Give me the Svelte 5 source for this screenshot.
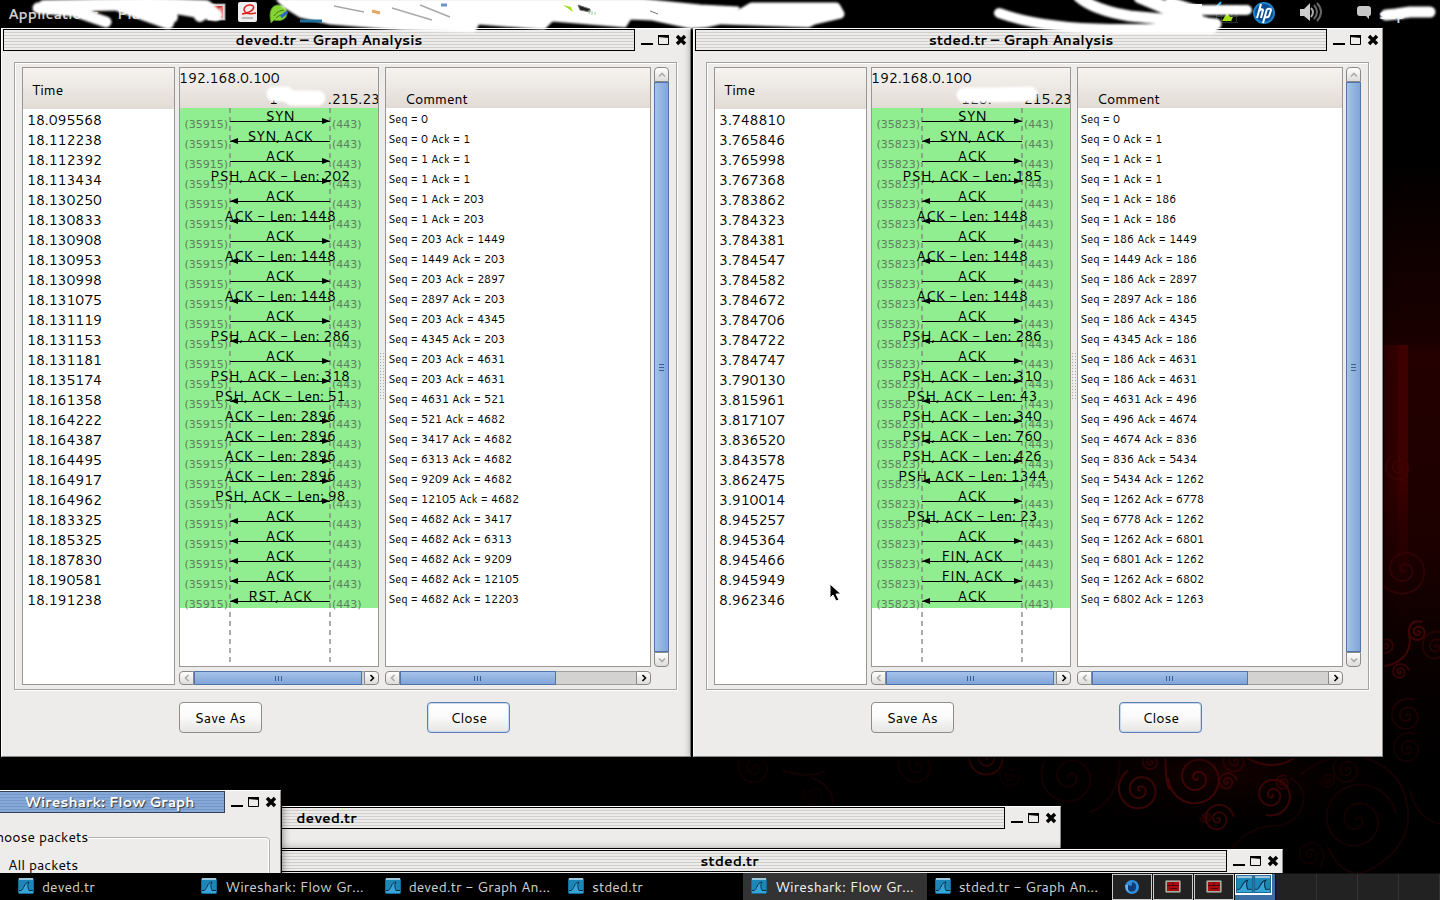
<script>
  const deved = {
    title: "deved.tr – Graph Analysis",
    port: "(35915)",
    prefix: "1",
    suffix: ".215.23",
    blot: "M12 10H24L30 14H56",
    rows: [
      ["18.095568", "SYN", 1, "Seq = 0"],
      ["18.112238", "SYN, ACK", 0, "Seq = 0 Ack = 1"],
      ["18.112392", "ACK", 1, "Seq = 1 Ack = 1"],
      ["18.113434", "PSH, ACK - Len: 202", 1, "Seq = 1 Ack = 1"],
      ["18.130250", "ACK", 0, "Seq = 1 Ack = 203"],
      ["18.130833", "ACK - Len: 1448", 0, "Seq = 1 Ack = 203"],
      ["18.130908", "ACK", 1, "Seq = 203 Ack = 1449"],
      ["18.130953", "ACK - Len: 1448", 0, "Seq = 1449 Ack = 203"],
      ["18.130998", "ACK", 1, "Seq = 203 Ack = 2897"],
      ["18.131075", "ACK - Len: 1448", 0, "Seq = 2897 Ack = 203"],
      ["18.131119", "ACK", 1, "Seq = 203 Ack = 4345"],
      ["18.131153", "PSH, ACK - Len: 286", 0, "Seq = 4345 Ack = 203"],
      ["18.131181", "ACK", 1, "Seq = 203 Ack = 4631"],
      ["18.135174", "PSH, ACK - Len: 318", 1, "Seq = 203 Ack = 4631"],
      ["18.161358", "PSH, ACK - Len: 51", 0, "Seq = 4631 Ack = 521"],
      ["18.164222", "ACK - Len: 2896", 1, "Seq = 521 Ack = 4682"],
      ["18.164387", "ACK - Len: 2896", 1, "Seq = 3417 Ack = 4682"],
      ["18.164495", "ACK - Len: 2896", 1, "Seq = 6313 Ack = 4682"],
      ["18.164917", "ACK - Len: 2896", 1, "Seq = 9209 Ack = 4682"],
      ["18.164962", "PSH, ACK - Len: 98", 1, "Seq = 12105 Ack = 4682"],
      ["18.183325", "ACK", 0, "Seq = 4682 Ack = 3417"],
      ["18.185325", "ACK", 0, "Seq = 4682 Ack = 6313"],
      ["18.187830", "ACK", 0, "Seq = 4682 Ack = 9209"],
      ["18.190581", "ACK", 0, "Seq = 4682 Ack = 12105"],
      ["18.191238", "RST, ACK", 0, "Seq = 4682 Ack = 12203"],
    ],
  };

  const stded = {
    title: "stded.tr – Graph Analysis",
    port: "(35823)",
    prefix: "128.",
    suffix: "215.23",
    blot: "M10 11H32L76 10",
    rows: [
      ["3.748810", "SYN", 1, "Seq = 0"],
      ["3.765846", "SYN, ACK", 0, "Seq = 0 Ack = 1"],
      ["3.765998", "ACK", 1, "Seq = 1 Ack = 1"],
      ["3.767368", "PSH, ACK - Len: 185", 1, "Seq = 1 Ack = 1"],
      ["3.783862", "ACK", 0, "Seq = 1 Ack = 186"],
      ["3.784323", "ACK - Len: 1448", 0, "Seq = 1 Ack = 186"],
      ["3.784381", "ACK", 1, "Seq = 186 Ack = 1449"],
      ["3.784547", "ACK - Len: 1448", 0, "Seq = 1449 Ack = 186"],
      ["3.784582", "ACK", 1, "Seq = 186 Ack = 2897"],
      ["3.784672", "ACK - Len: 1448", 0, "Seq = 2897 Ack = 186"],
      ["3.784706", "ACK", 1, "Seq = 186 Ack = 4345"],
      ["3.784722", "PSH, ACK - Len: 286", 0, "Seq = 4345 Ack = 186"],
      ["3.784747", "ACK", 1, "Seq = 186 Ack = 4631"],
      ["3.790130", "PSH, ACK - Len: 310", 1, "Seq = 186 Ack = 4631"],
      ["3.815961", "PSH, ACK - Len: 43", 0, "Seq = 4631 Ack = 496"],
      ["3.817107", "PSH, ACK - Len: 340", 1, "Seq = 496 Ack = 4674"],
      ["3.836520", "PSH, ACK - Len: 760", 0, "Seq = 4674 Ack = 836"],
      ["3.843578", "PSH, ACK - Len: 426", 1, "Seq = 836 Ack = 5434"],
      ["3.862475", "PSH, ACK - Len: 1344", 0, "Seq = 5434 Ack = 1262"],
      ["3.910014", "ACK", 1, "Seq = 1262 Ack = 6778"],
      ["8.945257", "PSH, ACK - Len: 23", 0, "Seq = 6778 Ack = 1262"],
      ["8.945364", "ACK", 1, "Seq = 1262 Ack = 6801"],
      ["8.945466", "FIN, ACK", 0, "Seq = 6801 Ack = 1262"],
      ["8.945949", "FIN, ACK", 1, "Seq = 1262 Ack = 6802"],
      ["8.962346", "ACK", 0, "Seq = 6802 Ack = 1263"],
    ],
  };

  const tasks = [
    { name: "deved.tr" },
    { name: "Wireshark: Flow Gr..." },
    { name: "deved.tr - Graph An..." },
    { name: "stded.tr" },
    { name: "Wireshark: Flow Gr...", active: true },
    { name: "stded.tr - Graph An..." },
  ];

  const workspaces = ["firefox", "term", "term", "sharks", "", "", "", ""];

  // x, y, radius, turn, opacity
  const swirls = [
    [988, 758, 19, 0, 0.7],
    [1070, 777, 34, 2, 0.3],
    [1011, 776, 12, 1, 0.2],
    [1140, 790, 23, 1, 0.9],
    [1151, 762, 10, 2, 0.7],
    [1197, 778, 29, 0, 1],
    [1227, 782, 10, 3, 0.8],
    [1235, 761, 13, 1, 0.6],
    [1272, 795, 21, 5, 0.9],
    [1283, 783, 8, 2, 0.6],
    [1218, 819, 16, 3, 0.8],
    [1206, 817, 6, 0, 0.6],
    [1357, 820, 40, 3, 0.3],
    [1347, 770, 15, 1, 0.3],
    [1328, 780, 8, 0, 0.25],
    [1408, 749, 17, 2, 0.3],
    [1310, 855, 15, 4, 0.25],
    [755, 768, 18, 1, 0.25],
    [917, 766, 22, 2, 0.25],
    [814, 795, 12, 1, 0.15],
    [1399, 468, 14, 1, 0.7],
    [1404, 570, 27, 0, 0.6],
    [1418, 632, 11, 2, 1],
    [1386, 645, 10, 1, 0.8],
    [1400, 672, 9, 3, 0.8],
    [1407, 716, 18, 2, 0.4],
    [1436, 647, 16, 2, 0.5],
  ];

  function spiral(cx, cy, r, turn) {
    let d = "";
    for (let i = 0; i <= 60; i++) {
      const a = turn + (i / 60) * Math.PI * 5;
      const rad = r * Math.pow(i / 60, 1.3);
      const x = cx + rad * Math.cos(a);
      const y = cy + rad * Math.sin(a);
      d += (i ? "L" : "M") + x.toFixed(1) + " " + y.toFixed(1);
    }
    return d;
  }
</script>

{#snippet titlebar(title, active)}
  <header class="titlebar">
    <h2 class:active>{title}</h2>
    <button aria-label="Minimize">
      <svg width="12" height="14"><path d="M0 10h12v2H0z" /></svg>
    </button>
    <button aria-label="Maximize">
      <svg width="12" height="14">
        <path d="M.5 2.5h10v9h-10z" fill="none" stroke="#000" />
        <path d="M0 2h11v3L0 4z" />
      </svg>
    </button>
    <button aria-label="Close window">
      <svg width="12" height="14"><path d="M2 3l8 8M10 3l-8 8" stroke="#000" stroke-width="3.4" /></svg>
    </button>
  </header>
{/snippet}

{#snippet arrow(dir, off)}
  <button class="step {dir}" class:off aria-label="Scroll {dir}">
    <svg width="8" height="8" viewBox="0 0 8 8">
      <path d="M2.5 1L5.5 4L2.5 7" fill="none" stroke="currentColor" stroke-width="1.6" />
    </svg>
  </button>
{/snippet}

{#snippet hscroll(size)}
  <div class="hscroll">
    {@render arrow("left", true)}
    <div class="trough"><div class="thumb" style="width: {size}%"><i></i><i></i><i></i></div></div>
    {@render arrow("right", false)}
  </div>
{/snippet}

{#snippet shark(size)}
  <svg class="shark" width={size} height={size} viewBox="0 0 16 16">
    <rect x=".5" y=".5" width="15" height="15" rx="1" fill="#1b86b8" stroke="#176c96" />
    <path d="M1 0h14v2H1z" fill="#9cc6dc" />
    <path d="M1 12c5 0 5-8 10-8c-2 3-1 6 0 8h4v3H1z" fill="#37a3d6" />
    <path d="M1 12.500h2c3-1 3-8 8-8.500c-2 3-1 6 0 8.500h4" fill="none" stroke="#0b2c40" />
  </svg>
{/snippet}

{#snippet analysis(win)}
  <section class="window">
    {@render titlebar(win.title, false)}
    <div class="frame">
      <div class="pane time">
        <div class="head">Time</div>
        <ol>
          {#each win.rows as row}
            <li>{row[0]}</li>
          {/each}
        </ol>
      </div>

      <div class="col graph">
        <div class="pane">
          <div class="head hosts">
            <div>192.168.0.100</div>
            <div class="host2">
              <span>{win.prefix}</span><span>{win.suffix}</span>
              <svg class="blot" width="90" height="26">
                <path d={win.blot} />
              </svg>
            </div>
          </div>
          <svg class="flow" width="198" height="558">
            <rect width="198" height={win.rows.length * 20} fill="#90ee90" />
            <path class="life" d="M50 0V554M150 0V554" />
            {#each win.rows as row, i}
              {@const y = i * 20 + 13}
              <text class="port" x="48" y={i * 20 + 20} text-anchor="end">{win.port}</text>
              <text class="port" x="152" y={i * 20 + 20}>(443)</text>
              <rect x="50" {y} width="100" height="1" />
              {#if row[2]}
                <path d="M150 {y}l-8 -3v6z" />
              {:else}
                <path d="M50 {y}l8 -3v6z" />
              {/if}
              <text class="flags" x="100" y={i * 20 + 13} text-anchor="middle">{row[1]}</text>
            {/each}
          </svg>
        </div>
        {@render hscroll(99)}
      </div>

      <div class="grip"></div>

      <div class="col comment">
        <div class="pane">
          <div class="head">Comment</div>
          <ol>
            {#each win.rows as row}
              <li>{row[3]}</li>
            {/each}
          </ol>
        </div>
        {@render hscroll(66)}
      </div>

      <div class="vscroll">
        {@render arrow("up", true)}
        <div class="thumb"><i></i><i></i><i></i></div>
        {@render arrow("down", true)}
      </div>
    </div>
    <footer>
      <button class="btn">Save As</button>
      <button class="btn default">Close</button>
    </footer>
  </section>
{/snippet}

<div class="desktop">
  <svg class="wallpaper" width="1440" height="900">
    <defs>
      <linearGradient id="glow" x1="0" y1="0" x2="0" y2="1">
        <stop offset="0" stop-color="#200000" stop-opacity="0" />
        <stop offset="0.3" stop-color="#1a0000" />
        <stop offset="0.32" stop-color="#240000" />
        <stop offset="0.65" stop-color="#1c0000" />
        <stop offset="1" stop-color="#0c0000" stop-opacity="0" />
      </linearGradient>
      <linearGradient id="beam" x1="0" y1="0" x2="0" y2="1">
        <stop offset="0" stop-color="#440000" />
        <stop offset="0.5" stop-color="#440000" />
        <stop offset="1" stop-color="#200000" stop-opacity="0" />
      </linearGradient>
      <radialGradient id="haze">
        <stop offset="0" stop-color="#160000" />
        <stop offset="1" stop-color="#000" stop-opacity="0" />
      </radialGradient>
    </defs>
    <rect width="1440" height="900" fill="#010000" />
    <rect x="1380" y="160" width="60" height="600" fill="url(#glow)" />
    <rect x="1380" y="345" width="28" height="280" fill="url(#beam)" opacity=".4" />
    <rect x="1398" y="345" width="10" height="260" fill="url(#beam)" opacity=".7" />
    <ellipse cx="1220" cy="770" rx="200" ry="70" fill="url(#haze)" />
    <g fill="none" stroke="#3e0505" stroke-width="2">
      {#each swirls as s}
        <path d={spiral(s[0], s[1], s[2], s[3])} opacity={s[4]} />
      {/each}
      <path d="M1236 750q34 28 64 4M1166 750q-2 30 4 40" />
      <path d="M1380 667q30-4 30-28q-4-14 6-18" />
      <path d="M1300 775q22-18 50-20q55 8 58 58q2 30-30 52t-50-18" opacity=".35" />
      <path d="M1230 850q20-26 50-24q24-8 24-30q-2-12-14-18" opacity=".3" />
      <path d="M1120 750q2 50-30 62" opacity=".3" />
      <path d="M782 770q30 10 44 0M810 777q26 10 22 30" opacity=".3" />
      <path d="M1410 790q6 28 30 34" opacity=".3" />
    </g>
  </svg>

  <nav class="panel">
    <div class="menus">
      <a href="#apps">Applications</a>
      <a href="#places">Places</a>
    </div>
    <svg width="58" height="28">
      <rect x="4" y="4" width="17" height="16" fill="#ddd" stroke="#999" />
      <path d="M6 6h13v12H6z" fill="#c33" />
      <path d="M6 14l13-8v12H6z" fill="#e77" />
      <rect x="34" y="2" width="19" height="20" rx="2" fill="#eee" />
      <path d="M38 14c14-2 14-10 7-9s-8 11 7 8" fill="none" stroke="#d22" stroke-width="1.500" />
      <path d="M38 18h11" stroke="#bbb" stroke-width="2" />
    </svg>
    <svg class="leaf" width="24" height="28">
      <path d="M2 22C-1 12 3 5 9 5c5 0 9 3 9 8c0 6-6 9-13 7l-3 3z" fill="#84d534" stroke="#4d8f17" />
      <path d="M5 16c4-6 8-5 10-6M7 18c3-3 6-3 9-4" fill="none" stroke="#3f7d10" />
      <path d="M12 17l6-5" stroke="#2a67c9" stroke-width="3" />
    </svg>
    <div class="spacer"></div>
    <div class="tray">
      <svg width="53" height="28">
        <path d="M0 4h17v18H0z" fill="#f4f1ea" />
        <path d="M5 18l9-5" stroke="#d77b35" stroke-width="3" />
        <path d="M31.500 5v18M36.500 5v18M41.500 5v18M46.500 5v18M51.500 5v18M31 6.500h22M31 11.500h22M31 16.500h22M31 22.500h22" stroke="#26302a" />
        <path d="M37 21l5-8l3 4h3l-2 4z" fill="#a4e215" />
        <path d="M31 8l5-6" stroke="#27b7e6" stroke-width="2" />
      </svg>
      <svg class="hp" width="22" height="28">
        <circle cx="11" cy="13" r="11" fill="#1c82cc" />
        <circle cx="11" cy="13" r="9" fill="#0a4c93" />
        <path d="M8 4L4 18M6 11q3-3 4-1l-2 8M14 9l-4 14M14 9q4-1 4 1l-2 6q-1 2-4 1" fill="none" stroke="#fff" stroke-width="2" />
      </svg>
      <svg class="volume" width="26" height="28">
        <path d="M0 9h4l6-6v18l-6-5H0z" fill="#ccc" />
        <path d="M11 8q4 4 0 9" fill="none" stroke="#aaa" stroke-width="2" />
        <path d="M14 5q6 7 0 14M17 3q8 9 0 18" fill="none" stroke="#666" stroke-width="2" />
      </svg>
      <svg width="16" height="28"><path d="M3 6h8q3 0 3 3v4q0 3-2 3v3l-3-3H3q-3 0-3-3V9q0-3 3-3z" fill="#c8c8c8" /></svg>
      <span class="user">sup</span>
    </div>
    <svg class="scribble left" width="860" height="34">
      <g>
        <path d="M38 8L74 11L106 22" stroke-width="11" />
        <path d="M44 6L150 4L206 6L216 15L176 8L120 6L168 23" stroke-width="12" />
        <path d="M140 8L172 17M196 8L200 16" stroke-width="12" />
        <path class="fill" d="M278 0H640L700 6L738 8L720 23L706 26L690 27L652 19L630 18L625 26L552 20L544 28L478 23L474 31L405 29L330 23L300 16L284 6z" stroke-width="3" />
        <path class="fill" d="M740 14L752 7H836L840 14L814 20L808 23L722 20z" stroke-width="9" />
      </g>
      <path d="M563 5l8 2l2 5z" fill="#a4de1c" />
      <path d="M578 5l12 4v3l-10-2zM650 11l8 3" fill="#222" stroke="#777" />
      <path d="M441 5h6" stroke="#6d93cf" stroke-width="3" />
      <path d="M372 11l8 2" stroke="#e9a766" stroke-width="3" />
      <path d="M300 21h22" stroke="#1e6f9c" stroke-width="3" />
      <path d="M334 6l30 6M392 8l40 12M420 5l30 12" stroke="#aaa" stroke-width="1.500" />
      <path d="M589 10v4M592 11v4M595 12v3" stroke="#9ad29a" />
    </svg>
    <svg class="scribble right" width="450" height="38">
      <g>
        <path d="M9 13Q50 28 120 29L222 29" stroke-width="10" />
        <path d="M89 -3Q104 10 140 16L226 24" stroke-width="11" />
        <path d="M150 -3L200 18L222 26" stroke-width="13" />
        <path d="M180 2L206 10H257" stroke-width="10" />
        <path d="M440 12L420 12L406 14L396 15" stroke-width="11" />
      </g>
    </svg>
  </nav>

  <div class="workspace">
    {@render analysis(deved)}
    {@render analysis(stded)}
  </div>

  <section class="window back main1">{@render titlebar("deved.tr", false)}</section>
  <section class="window back main2">{@render titlebar("stded.tr", false)}</section>
  <section class="window back dialog">
    {@render titlebar("Wireshark: Flow Graph", true)}
    <fieldset>
      <legend>Choose packets</legend>
      <label><input type="radio" name="packets" />All packets</label>
    </fieldset>
  </section>

  <div class="taskbar">
    <div class="tasks">
      {#each tasks as task}
        <button class:active={task.active}>{@render shark(16)}<span>{task.name}</span></button>
      {/each}
    </div>
    <div class="pager">
      {#each workspaces as ws, i}
        <button class={ws} class:used={ws} aria-label="Workspace {i + 1}">
          {#if ws == "firefox"}
            <svg width="16" height="16">
              <circle cx="8" cy="8" r="7" fill="#2f8fdd" />
              <path d="M8 3q5 1 4 6t-7 3q-3-3-1-6l3 1l1-2z" fill="#123a75" />
              <path d="M1 6q1 8 8 9q-6-1-5-9z" fill="#64b5f0" />
            </svg>
          {:else if ws == "term"}
            <svg width="16" height="16">
              <rect x=".5" y="1.500" width="15" height="12" rx="1" fill="#a9a9a2" stroke="#77776f" />
              <path d="M2 3h12v9H2z" fill="#a80d12" />
              <path d="M2 6.500h12M5 9.500h7M8 3v4" stroke="#4d0508" />
            </svg>
          {:else if ws == "sharks"}
            <span>{@render shark(17)}{@render shark(17)}</span>
          {/if}
        </button>
      {/each}
    </div>
  </div>

  <svg class="cursor" width="14" height="20">
    <path d="M1 1v14l3-3l3 6l3-1l-3-6h5z" fill="#000" stroke="#fff" />
  </svg>
</div>

<style>
  :global(body) {
    background: #000;
  }
  .desktop {
    background: #000;
    color: #000;
    display: flex;
    flex-direction: column;
    font-family: Cantarell, "Noto Sans", sans-serif;
    font-size: 14px;
    min-height: 100vh;
    overflow: hidden;
    position: relative;
  }
  button {
    background: none;
    border: 0;
    color: inherit;
    font: inherit;
    padding: 0;
  }
  svg {
    display: block;
    flex: none;
  }
  .wallpaper {
    bottom: 0;
    position: absolute;
    right: 0;
  }

  /* top panel */
  .panel {
    background: #000;
    display: flex;
    font-weight: bold;
    height: 28px;
    line-height: 28px;
    position: relative;
    z-index: 5;
  }
  .menus {
    display: flex;
    flex: 0 0 196px;
    gap: 18px;
    padding-left: 8px;
  }
  .panel a {
    color: #ccc;
    text-decoration: none;
  }
  .leaf {
    margin-left: 7px;
  }
  .spacer {
    flex: 1;
  }
  .tray {
    color: #ccc;
    display: flex;
    gap: 6px;
  }
  .hp {
    margin-left: 9px;
  }
  .volume {
    margin: 0 25px 0 19px;
  }
  .user {
    width: 61px;
  }
  .scribble {
    overflow: visible;
    position: absolute;
    top: 0;
  }
  .scribble.left {
    left: 0;
  }
  .scribble.right {
    right: 0;
  }
  .scribble g,
  .blot {
    fill: none;
    filter: blur(1px);
    stroke: #fff;
    stroke-linecap: round;
    stroke-linejoin: round;
  }
  .fill {
    fill: #fff;
  }

  /* windows */
  .workspace {
    display: flex;
    gap: 2px;
    margin: 0 57px 0 1px;
    position: relative;
  }
  .window {
    background: #edecea;
    border-bottom: 1px solid #8c8b89;
    border-left: 1px solid #fff;
    border-right: 1px solid #8c8b89;
    border-top: 1px solid #fff;
    box-shadow: 0 0 0 1px #000, 0 2px 9px rgba(0, 0, 0, 0.6);
    box-sizing: border-box;
    flex: 1;
    min-width: 0;
  }
  .titlebar {
    align-items: center;
    display: flex;
    gap: 5px;
    padding: 0 3px 0 1px;
  }
  .titlebar h2 {
    background: repeating-linear-gradient(#edecea 0 2px, #cfcecb 2px 3px);
    border: 1px solid #000;
    flex: 1;
    font-size: 14px;
    line-height: 19px;
    margin: 0 1px 0 0;
    padding: 1px 0 0 20px;
    text-align: center;
    white-space: nowrap;
  }
  .titlebar h2.active {
    background: repeating-linear-gradient(#86a9d8 0 2px, #7397c8 2px 3px);
    border-color: #33415a;
    color: #fff;
    text-shadow: 1px 1px 1px #333;
  }
  .frame {
    border: 1px solid #a5a3a0;
    box-shadow: 1px 1px #fff, inset 1px 1px #fff;
    display: flex;
    margin: 11px 13px 0 12px;
    padding: 4px 7px 4px;
  }
  .pane {
    background: #fff;
    border: 1px solid #999794;
    box-sizing: border-box;
    overflow: hidden;
  }
  .pane.time {
    flex: 0 0 153px;
    margin-right: 4px;
  }
  .head {
    background: linear-gradient(#f6f3f0, #e2dbd5);
    box-sizing: border-box;
    height: 40px;
  }
  .time .head {
    height: 41px;
    line-height: 44px;
    padding-left: 9px;
  }
  ol {
    list-style: none;
    margin: 0;
    padding: 1px 0 0;
  }
  li {
    line-height: 20px;
    white-space: nowrap;
  }
  .time li {
    padding-left: 4px;
  }
  .col {
    display: flex;
    flex-direction: column;
    gap: 4px;
  }
  .col .pane {
    flex: 1;
  }
  .graph {
    flex: 0 0 200px;
  }
  .hosts {
    line-height: 20px;
    text-indent: -1px;
  }
  .host2 {
    display: flex;
    height: 20px;
    justify-content: space-between;
    line-height: 22px;
    margin: 0 -2px 0 90px;
    position: relative;
  }
  .blot {
    left: -8px;
    position: absolute;
    stroke-width: 15px;
    top: -4px;
  }
  .life {
    fill: none;
    stroke: #808080;
    stroke-dasharray: 5 4;
    stroke-opacity: 0.65;
    stroke-width: 2;
  }
  .port {
    fill: #5f7f5f;
    font-family: "DejaVu Sans", sans-serif;
    font-size: 11px;
  }
  .grip {
    align-self: center;
    background: radial-gradient(#aaa 1px, transparent 1px) 0 0 / 3px 3px;
    height: 48px;
    margin: 0 1px 0 0;
    width: 5px;
  }
  .comment {
    flex: 1;
    min-width: 0;
  }
  .comment .head {
    line-height: 62px;
    padding-left: 19px;
  }
  .comment li {
    font-size: 11px;
    padding-left: 2px;
  }

  /* scrollbars */
  .hscroll,
  .vscroll {
    display: flex;
  }
  .hscroll {
    height: 14px;
  }
  .vscroll {
    flex-direction: column;
    margin: 0 0 18px 3px;
    width: 15px;
  }
  .step {
    align-items: center;
    background: linear-gradient(#fff, #dddcd9);
    border: 1px solid #8b8987;
    box-sizing: border-box;
    color: #000;
    display: flex;
    flex: 0 0 15px;
    justify-content: center;
  }
  .step.off {
    color: #aaa;
  }
  .step.left {
    border-radius: 4px 0 0 4px;
  }
  .step.right {
    border-radius: 0 4px 4px 0;
  }
  .up {
    border-radius: 4px 4px 0 0;
  }
  .down {
    border-radius: 0 0 4px 4px;
  }
  .left svg {
    transform: rotate(180deg);
  }
  .up svg {
    transform: rotate(270deg);
  }
  .down svg {
    transform: rotate(90deg);
  }
  .trough {
    background: #d3d2d0;
    border: solid #a09e9b;
    border-width: 1px 0;
    box-sizing: border-box;
    display: flex;
    flex: 1;
  }
  .thumb {
    align-items: center;
    background: linear-gradient(#a5c3ea, #81a5d6);
    border: 1px solid #4f75aa;
    box-sizing: border-box;
    display: flex;
    gap: 2px;
    justify-content: center;
    margin: -1px 0;
  }
  .thumb i {
    background: #3a5f95;
    height: 5px;
    width: 1px;
  }
  .vscroll .thumb {
    background: linear-gradient(90deg, #a5c3ea, #81a5d6);
    flex: 1;
    flex-direction: column;
    margin: 0;
  }
  .vscroll .thumb i {
    height: 1px;
    width: 5px;
  }

  footer {
    display: flex;
    justify-content: space-evenly;
    padding: 12px 14px 23px 11px;
  }
  .btn {
    background: linear-gradient(#fff, #fafafa 50%, #e6e5e3);
    border: 1px solid #8f8d8a;
    border-radius: 4px;
    height: 31px;
    width: 83px;
  }
  .btn.default {
    border-color: #5c80b4;
    box-shadow: inset 0 0 0 1px #c8d8ee;
  }

  /* windows behind, only partly on screen */
  .back {
    bottom: 0;
    position: absolute;
  }
  .main1 {
    height: 94px;
    left: -374px;
    right: 379px;
  }
  .main2 {
    height: 51px;
    left: 210px;
    right: 157px;
  }
  .dialog {
    height: 110px;
    left: -28px;
    width: 309px;
  }
  fieldset {
    border: 1px solid #b3b1ae;
    border-radius: 4px;
    box-shadow: inset -1px 1px #fff;
    height: 60px;
    margin: 15px 10px 0 5px;
    padding: 0 0 0 7px;
  }
  legend {
    line-height: 18px;
    padding: 0;
  }
  label {
    align-items: center;
    display: flex;
    gap: 8px;
    line-height: 18px;
    margin-top: 10px;
  }
  input {
    height: 14px;
    margin: 0;
    width: 14px;
  }

  /* taskbar */
  .taskbar {
    background: #000;
    display: flex;
    height: 27px;
    margin-top: auto;
    padding-left: 10px;
    position: relative;
    z-index: 4;
  }
  .tasks {
    display: flex;
    flex: 1;
    min-width: 0;
  }
  .tasks button {
    align-items: center;
    color: #ccc;
    display: flex;
    flex: 1 1 0;
    gap: 8px;
    min-width: 0;
    padding: 0 8px 2px;
    text-align: left;
    white-space: nowrap;
  }
  .tasks span {
    overflow: hidden;
    padding-top: 2px;
  }
  .tasks .active {
    background: #333;
    color: #eee;
  }
  .pager {
    background: #111;
    display: flex;
    margin-left: 2px;
    padding-top: 1px;
  }
  .pager button {
    align-items: center;
    background: #222;
    border-right: 1px solid #333;
    box-sizing: border-box;
    display: flex;
    flex: 0 0 41px;
    justify-content: center;
  }
  .pager .used {
    border: 1px solid #ccc;
    flex-basis: 40px;
    margin-right: 1px;
  }
  .pager .sharks {
    align-items: flex-start;
    background: #3a6ea5;
    border: 0;
    flex-direction: column;
    justify-content: flex-start;
  }
  .pager span {
    border: 1px solid #fff;
    border-bottom-width: 2px;
    display: flex;
    gap: 1px;
    padding-top: 1px;
  }

  .cursor {
    left: 829px;
    position: absolute;
    top: 583px;
    z-index: 6;
  }
</style>
